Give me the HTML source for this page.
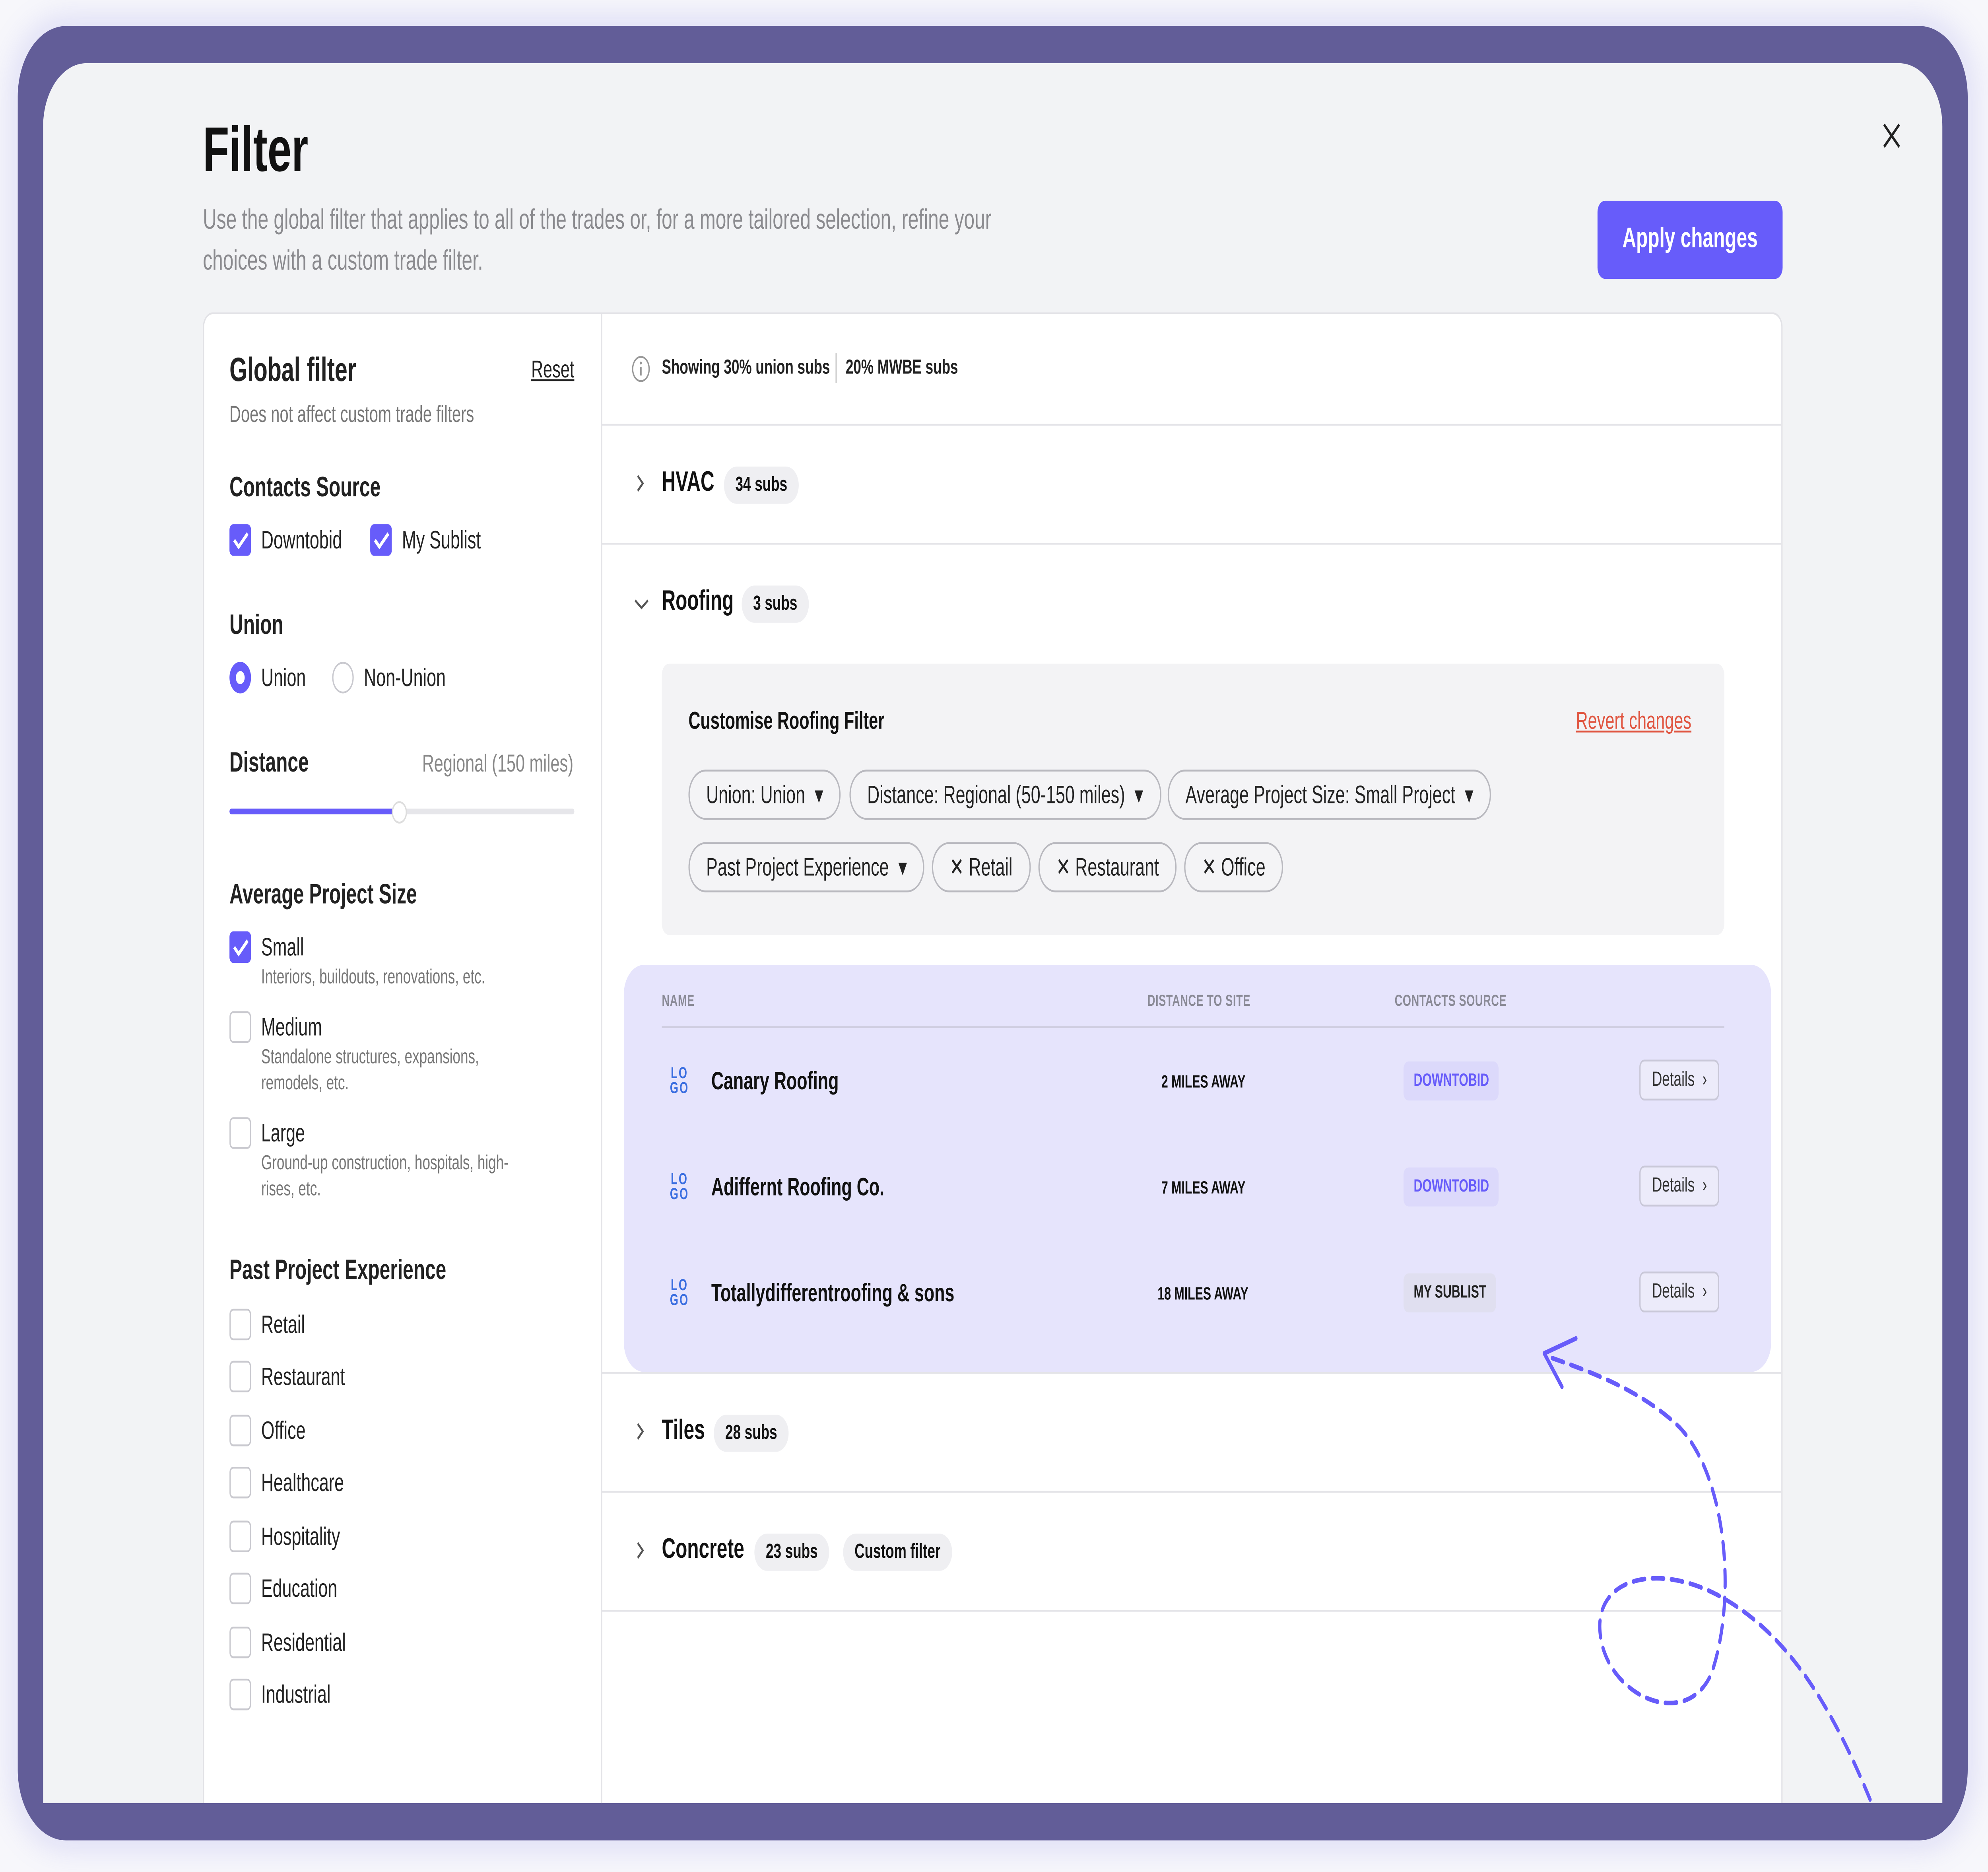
<!DOCTYPE html>
<html><head><meta charset="utf-8"><style>
*{box-sizing:border-box;margin:0;padding:0}
html,body{width:100%;height:100%;overflow:hidden;background:#f7f7fb}
svg.root{display:block;width:100vw;height:100vh}
#w{position:relative;width:1568px;height:1007px;font-family:"Liberation Sans",sans-serif;color:#111;background:#f7f7fb}
.a{position:absolute;white-space:nowrap}
.frame{left:14px;top:14px;width:1538px;height:976px;background:#625d98;border-radius:38px;box-shadow:0 0 18px 6px rgba(120,120,230,.18)}
.panel{left:34px;top:34px;width:1498px;height:936px;background:#f2f3f5;border-radius:34px 34px 0 0}
.card{left:160px;top:168px;width:1246px;height:802px;background:#fff;border:1px solid #e2e2e6;border-bottom:none;border-radius:8px 8px 0 0}
.cb{position:absolute;width:17px;height:17px;border:1.5px solid #c9c9cf;border-radius:3px;background:#fff}
.cb.on{background:#675cfa;border-color:#675cfa}
.cb.on:after{content:"";position:absolute;left:5px;top:1px;width:4px;height:9px;border:solid #fff;border-width:0 2px 2px 0;transform:rotate(45deg)}
.lbl{font-size:13.5px;color:#222}
.sub{font-size:11px;color:#777;line-height:14px}
.h{font-size:15px;font-weight:bold;color:#222}
.hr{position:absolute;height:1px;background:#e4e4e8}
.pill{position:absolute;top:0;height:27px;border:1px solid #b9b9bf;border-radius:14px;font-size:13.5px;line-height:25px;padding:0 13px;color:#222;background:#f4f4f6}
.tag{font-size:11px;font-weight:bold;background:#efeff2;border-radius:12px;padding:4px 9px}
.logo{position:absolute;width:20px;height:20px;font-size:8.5px;font-weight:bold;color:#3a6ee0;line-height:8px;text-align:center;letter-spacing:1px}
.src{font-size:9.5px;font-weight:bold;border-radius:4px;padding:5px 8px}
.det{font-size:11px;border:1px solid #c9c8d8;border-radius:4px;padding:4px 9px;color:#333;background:#ecebfa}
.th{font-size:8.5px;font-weight:bold;color:#8a8a96;letter-spacing:.2px}
</style></head><body>
<svg class="root" viewBox="0 0 1568 1007" preserveAspectRatio="none" xmlns="http://www.w3.org/2000/svg">
<foreignObject x="0" y="0" width="1568" height="1007">
<div xmlns="http://www.w3.org/1999/xhtml" id="w">
<div class="a frame"></div>
<div class="a panel"></div>
<div class="a" style="left:160px;top:62px;font-size:34px;font-weight:bold">Filter</div>
<div class="a" style="left:160px;top:108px;font-size:15px;color:#8a8a8e;line-height:22px;white-space:normal;width:660px">Use the global filter that applies to all of the trades or, for a more tailored selection, refine your choices with a custom trade filter.</div>
<div class="a" style="left:1260px;top:108px;width:146px;height:42px;background:#675cfa;border-radius:6px;color:#fff;font-size:15px;font-weight:bold;text-align:center;line-height:42px">Apply changes</div>
<svg class="a" style="left:1484px;top:65px" width="16" height="16"><path d="M2 2L14 14M14 2L2 14" stroke="#222" stroke-width="1.6"/></svg>
<div class="a card"></div>
<div class="a" style="left:474px;top:169px;width:1px;height:801px;background:#e4e4e8"></div>

<div class="a" style="left:181px;top:189px;font-size:18px;font-weight:bold;color:#222">Global filter</div>
<div class="a" style="left:419px;top:191px;font-size:13px;color:#222;text-decoration:underline">Reset</div>
<div class="a sub" style="left:181px;top:216px;font-size:12.5px">Does not affect custom trade filters</div>
<div class="a h" style="left:181px;top:254px">Contacts Source</div>
<div class="cb on" style="left:181px;top:282px"></div><div class="a lbl" style="left:206px;top:283px">Downtobid</div>
<div class="cb on" style="left:292px;top:282px"></div><div class="a lbl" style="left:317px;top:283px">My Sublist</div>
<div class="a h" style="left:181px;top:328px">Union</div>
<div class="a" style="left:181px;top:356px;width:17px;height:17px;border-radius:50%;border:5px solid #675cfa;background:#fff"></div><div class="a lbl" style="left:206px;top:357px">Union</div>
<div class="a" style="left:262px;top:356px;width:17px;height:17px;border-radius:50%;border:1.5px solid #c9c9cf;background:#fff"></div><div class="a lbl" style="left:287px;top:357px">Non-Union</div>
<div class="a h" style="left:181px;top:402px">Distance</div>
<div class="a" style="left:333px;top:403px;font-size:13px;color:#888">Regional (150 miles)</div>
<div class="a" style="left:181px;top:435px;width:272px;height:3px;background:#e6e6ea;border-radius:2px"></div>
<div class="a" style="left:181px;top:435px;width:134px;height:3px;background:#675cfa;border-radius:2px"></div>
<div class="a" style="left:309px;top:431px;width:12px;height:12px;border-radius:50%;background:#fff;border:1px solid #ddd"></div>
<div class="a h" style="left:181px;top:473px">Average Project Size</div>
<div class="cb on" style="left:181px;top:501px"></div><div class="a lbl" style="left:206px;top:502px">Small</div>
<div class="a sub" style="left:206px;top:519px">Interiors, buildouts, renovations, etc.</div>
<div class="cb" style="left:181px;top:544px"></div><div class="a lbl" style="left:206px;top:545px">Medium</div>
<div class="a sub" style="left:206px;top:562px;white-space:normal;width:200px">Standalone structures, expansions, remodels, etc.</div>
<div class="cb" style="left:181px;top:601px"></div><div class="a lbl" style="left:206px;top:602px">Large</div>
<div class="a sub" style="left:206px;top:619px;white-space:normal;width:200px">Ground-up construction, hospitals, high-rises, etc.</div>
<div class="a h" style="left:181px;top:675px">Past Project Experience</div>
<div class="cb" style="left:181px;top:704px"></div><div class="a lbl" style="left:206px;top:705px">Retail</div>
<div class="cb" style="left:181px;top:732px"></div><div class="a lbl" style="left:206px;top:733px">Restaurant</div>
<div class="cb" style="left:181px;top:761px"></div><div class="a lbl" style="left:206px;top:762px">Office</div>
<div class="cb" style="left:181px;top:789px"></div><div class="a lbl" style="left:206px;top:790px">Healthcare</div>
<div class="cb" style="left:181px;top:818px"></div><div class="a lbl" style="left:206px;top:819px">Hospitality</div>
<div class="cb" style="left:181px;top:846px"></div><div class="a lbl" style="left:206px;top:847px">Education</div>
<div class="cb" style="left:181px;top:875px"></div><div class="a lbl" style="left:206px;top:876px">Residential</div>
<div class="cb" style="left:181px;top:903px"></div><div class="a lbl" style="left:206px;top:904px">Industrial</div>

<svg class="a" style="left:498px;top:191px" width="15" height="15"><circle cx="7.5" cy="7.5" r="6.5" fill="none" stroke="#999" stroke-width="1"/><path d="M7.5 6.5v4.5" stroke="#999" stroke-width="1.2"/><circle cx="7.5" cy="4.3" r=".8" fill="#999"/></svg>
<div class="a" style="left:522px;top:192px;font-size:11px;font-weight:bold;color:#222">Showing 30% union subs</div>
<div class="a" style="left:659px;top:190px;width:1px;height:16px;background:#ccc"></div>
<div class="a" style="left:667px;top:192px;font-size:11px;font-weight:bold;color:#222">20% MWBE subs</div>
<div class="hr" style="left:475px;top:228px;width:930px"></div>

<svg class="a" style="left:500px;top:255px" width="10" height="10"><path d="M3 1l4 4-4 4" fill="none" stroke="#555" stroke-width="1.3"/></svg>
<div class="a" style="left:522px;top:251px;font-size:15px;font-weight:bold">HVAC</div>
<div class="a tag" style="left:571px;top:251px">34 subs</div>
<div class="hr" style="left:475px;top:292px;width:930px"></div>

<svg class="a" style="left:500px;top:320px" width="12" height="10"><path d="M1 3l5 4 5-4" fill="none" stroke="#555" stroke-width="1.3"/></svg>
<div class="a" style="left:522px;top:315px;font-size:15px;font-weight:bold">Roofing</div>
<div class="a tag" style="left:585px;top:315px">3 subs</div>

<div class="a" style="left:522px;top:357px;width:838px;height:146px;background:#f3f3f5;border-radius:6px"></div>
<div class="a" style="left:543px;top:380px;font-size:13px;font-weight:bold">Customise Roofing Filter</div>
<div class="a" style="left:1243px;top:380px;font-size:13px;color:#e0543f;text-decoration:underline">Revert changes</div>
<div class="a" style="left:0;top:414px;width:1568px;height:28px">
<div class="pill" style="left:543px">Union: Union &#160;▾</div>
<div class="pill" style="left:670px">Distance: Regional (50-150 miles) &#160;▾</div>
<div class="pill" style="left:921px">Average Project Size: Small Project &#160;▾</div>
</div>
<div class="a" style="left:0;top:453px;width:1568px;height:28px">
<div class="pill" style="left:543px">Past Project Experience &#160;▾</div>
<div class="pill" style="left:735px">✕ Retail</div>
<div class="pill" style="left:819px">✕ Restaurant</div>
<div class="pill" style="left:934px">✕ Office</div>
</div>

<div class="a" style="left:492px;top:519px;width:905px;height:219px;background:#e6e4fc;border-radius:16px"></div>
<div class="a th" style="left:522px;top:533px">NAME</div>
<div class="a th" style="left:905px;top:533px">DISTANCE TO SITE</div>
<div class="a th" style="left:1100px;top:533px">CONTACTS SOURCE</div>
<div class="hr" style="left:522px;top:552px;width:838px;background:#cfcde0"></div>

<div class="logo" style="left:526px;top:573px">LO<br/>GO</div>
<div class="a" style="left:561px;top:574px;font-size:13.5px;font-weight:bold">Canary Roofing</div>
<div class="a" style="left:916px;top:577px;font-size:9.5px;font-weight:bold">2 MILES AWAY</div>
<div class="a src" style="left:1107px;top:571px;background:#dcd9fb;color:#675cfa">DOWNTOBID</div>
<div class="a det" style="left:1293px;top:570px">Details &#160;›</div>

<div class="logo" style="left:526px;top:630px">LO<br/>GO</div>
<div class="a" style="left:561px;top:631px;font-size:13.5px;font-weight:bold">Adiffernt Roofing Co.</div>
<div class="a" style="left:916px;top:634px;font-size:9.5px;font-weight:bold">7 MILES AWAY</div>
<div class="a src" style="left:1107px;top:628px;background:#dcd9fb;color:#675cfa">DOWNTOBID</div>
<div class="a det" style="left:1293px;top:627px">Details &#160;›</div>

<div class="logo" style="left:526px;top:687px">LO<br/>GO</div>
<div class="a" style="left:561px;top:688px;font-size:13.5px;font-weight:bold">Totallydifferentroofing &amp; sons</div>
<div class="a" style="left:913px;top:691px;font-size:9.5px;font-weight:bold">18 MILES AWAY</div>
<div class="a src" style="left:1107px;top:685px;background:#e0dff0;color:#222">MY SUBLIST</div>
<div class="a det" style="left:1293px;top:684px">Details &#160;›</div>

<div class="hr" style="left:475px;top:738px;width:930px"></div>
<svg class="a" style="left:500px;top:765px" width="10" height="10"><path d="M3 1l4 4-4 4" fill="none" stroke="#555" stroke-width="1.3"/></svg>
<div class="a" style="left:522px;top:761px;font-size:15px;font-weight:bold">Tiles</div>
<div class="a tag" style="left:563px;top:761px">28 subs</div>
<div class="hr" style="left:475px;top:802px;width:930px"></div>
<svg class="a" style="left:500px;top:829px" width="10" height="10"><path d="M3 1l4 4-4 4" fill="none" stroke="#555" stroke-width="1.3"/></svg>
<div class="a" style="left:522px;top:825px;font-size:15px;font-weight:bold">Concrete</div>
<div class="a tag" style="left:595px;top:825px">23 subs</div>
<div class="a tag" style="left:665px;top:825px">Custom filter</div>
<div class="hr" style="left:475px;top:866px;width:930px"></div>
</div>
</foreignObject>
<path d="M1475 968 C1440 910 1405 878 1360 860 C1310 840 1258 848 1262 878 C1266 912 1330 932 1350 900 C1370 860 1362 795 1325 768 C1295 748 1255 738 1222 730" fill="none" stroke="#675cfa" stroke-width="2.5" stroke-dasharray="9 6" stroke-linecap="round"/>
<path d="M1243 720 L1218 728 L1232 746" fill="none" stroke="#675cfa" stroke-width="2.5" stroke-linecap="round" stroke-linejoin="round"/>
</svg>
</body></html>
